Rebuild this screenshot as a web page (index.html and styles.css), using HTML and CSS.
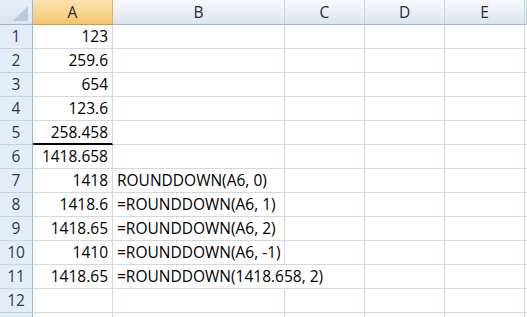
FILE: index.html
```html
<!DOCTYPE html>
<html lang="en">
<head>
  <meta charset="UTF-8" />
  <title>ROUNDDOWN - Sheet1</title>
  <link rel="stylesheet" href="styles.css">
</head>
<body>

  <div class="sheet">
    <!-- column headers -->
    <div class="corner"><span class="tri"></span></div>
    <div class="col-head active">A</div>
    <div class="col-head">B</div>
    <div class="col-head">C</div>
    <div class="col-head">D</div>
    <div class="col-head">E</div>
    <div class="col-head"></div>

    <div class="row-head">1</div>
    <div class="cell num">123</div><div class="cell"></div><div class="cell"></div><div class="cell"></div><div class="cell"></div><div class="cell"></div>

    <div class="row-head">2</div>
    <div class="cell num">259.6</div><div class="cell"></div><div class="cell"></div><div class="cell"></div><div class="cell"></div><div class="cell"></div>

    <div class="row-head">3</div>
    <div class="cell num">654</div><div class="cell"></div><div class="cell"></div><div class="cell"></div><div class="cell"></div><div class="cell"></div>

    <div class="row-head">4</div>
    <div class="cell num">123.6</div><div class="cell"></div><div class="cell"></div><div class="cell"></div><div class="cell"></div><div class="cell"></div>

    <div class="row-head">5</div>
    <div class="cell num total-line">258.458</div><div class="cell"></div><div class="cell"></div><div class="cell"></div><div class="cell"></div><div class="cell"></div>

    <div class="row-head">6</div>
    <div class="cell num">1418.658</div><div class="cell"></div><div class="cell"></div><div class="cell"></div><div class="cell"></div><div class="cell"></div>

    <div class="row-head">7</div>
    <div class="cell num">1418</div><div class="cell text">ROUNDDOWN(A6, 0)</div><div class="cell"></div><div class="cell"></div><div class="cell"></div><div class="cell"></div>

    <div class="row-head">8</div>
    <div class="cell num">1418.6</div><div class="cell text">=ROUNDDOWN(A6, 1)</div><div class="cell"></div><div class="cell"></div><div class="cell"></div><div class="cell"></div>

    <div class="row-head">9</div>
    <div class="cell num">1418.65</div><div class="cell text">=ROUNDDOWN(A6, 2)</div><div class="cell"></div><div class="cell"></div><div class="cell"></div><div class="cell"></div>

    <div class="row-head">10</div>
    <div class="cell num">1410</div><div class="cell text">=ROUNDDOWN(A6, -1)</div><div class="cell"></div><div class="cell"></div><div class="cell"></div><div class="cell"></div>

    <div class="row-head">11</div>
    <div class="cell num">1418.65</div><div class="cell text overflow">=ROUNDDOWN(1418.658, 2)</div><div class="cell"></div><div class="cell"></div><div class="cell"></div><div class="cell"></div>

    <div class="row-head">12</div>
    <div class="cell"></div><div class="cell"></div><div class="cell"></div><div class="cell"></div><div class="cell"></div><div class="cell"></div>

    <div class="row-head last"></div>
    <div class="cell last"></div><div class="cell last"></div><div class="cell last"></div><div class="cell last"></div><div class="cell last"></div><div class="cell last"></div>
  </div>

</body>
</html>
```

FILE: styles.css
```css
body {
  margin: 0;
  background-color: white;
  font-family: "Open Sans", "Liberation Sans", sans-serif;
  font-size: 15.5px;
  color: black;
  overflow: hidden;
}

.sheet {
  display: grid;
  grid-template-columns: 33px 80px 172px 80px 80px 80px 2px;
  grid-template-rows: 25px repeat(12, 24px) 4px;
}

.corner,
.col-head,
.row-head,
.cell {
  box-sizing: border-box;
  white-space: nowrap;
}

.corner {
  position: relative;
  background: linear-gradient(#eaf0f7, #d9e3ef);
  border-right: 1px solid #9eb6ce;
  border-bottom: 1px solid #9eb6ce;
}

/* select-all triangle */
.corner .tri {
  position: absolute;
  right: 4px;
  bottom: 3px;
  width: 0;
  height: 0;
  border-left: 15px solid transparent;
  border-bottom: 15px solid #b9c8da;
}

.col-head {
  background: linear-gradient(#f7f9fc, #e9eef5 55%, #dbe3ee);
  border-right: 1px solid #c8d3e1;
  border-bottom: 1px solid #9eb6ce;
  text-align: center;
  line-height: 24px;
  color: #2b2b2b;
}

.col-head.active {
  background: linear-gradient(#fbe2ae, #f8d590 50%, #f3c46c);
  border-right-color: #d6b070;
  border-bottom-color: #c29b5a;
}

.row-head {
  background-color: #e4ecf7;
  border-right: 1px solid #9eb6ce;
  border-bottom: 1px solid #c5d2e2;
  text-align: center;
  line-height: 23px;
  color: #2a3a55;
}

.cell {
  border-right: 1px solid #d0d7e5;
  border-bottom: 1px solid #d0d7e5;
  line-height: 23px;
  padding: 0 4px;
}

.last {
  border-bottom: none;
}

.num {
  text-align: right;
}

.text {
  text-align: left;
  padding-left: 4px;
}

.overflow {
  overflow: visible;
  border-right-color: transparent;
}

.total-line {
  border-bottom: 2px solid black;
}
```
